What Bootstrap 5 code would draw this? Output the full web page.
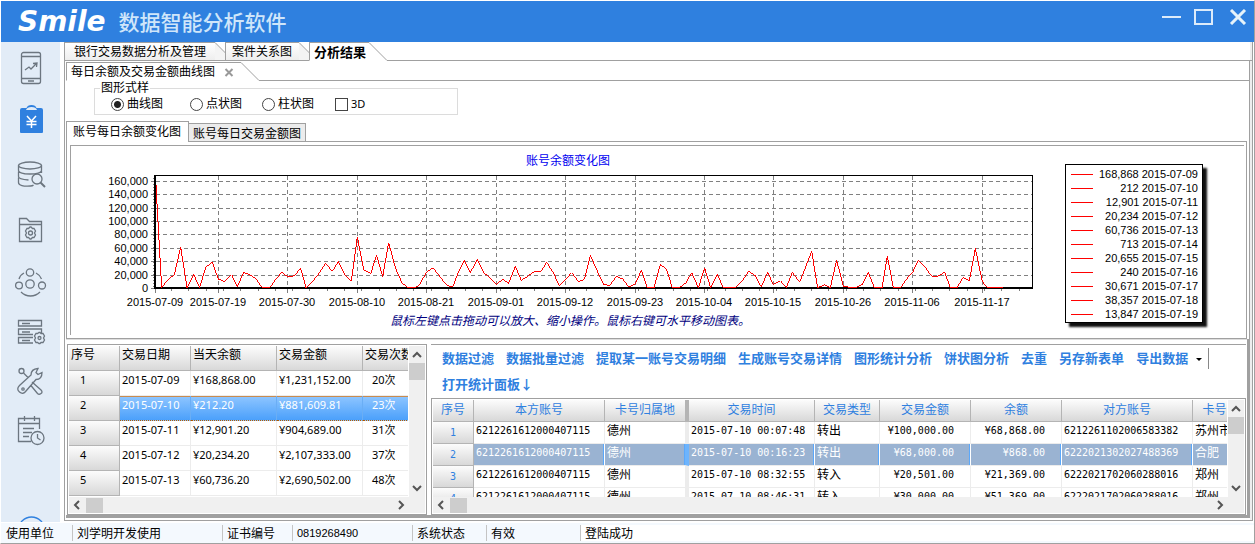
<!DOCTYPE html>
<html lang="zh-CN">
<head>
<meta charset="utf-8">
<meta name="viewport" content="width=device-width, initial-scale=1">
<title>Smile 数据智能分析软件</title>
<link href="https://cdn.jsdelivr.net/npm/bootstrap@5.3.0/dist/css/bootstrap.min.css" rel="stylesheet">
<style>
:root{--brand:#2f80df;--line:#a0a0a0;--cjk:"Noto Sans CJK SC";}
body{font:12px/18px "Noto Sans",var(--cjk),sans-serif;color:#000;background:#fff}
button{background:none;border:0;padding:0;color:inherit;font:inherit}
.shrinkable{min-width:0;min-height:0}
.app{height:100vh;min-height:500px;border:1px solid #fff;border-right-color:var(--line);border-bottom-color:var(--line);overflow:hidden}
.titlebar{height:41px;background:var(--brand);color:#e6f1fc;padding:0 7px 0 17px}
.logo{font:italic bold 28px/42px "DejaVu Sans",sans-serif;color:#fff}
.product{font:500 21px/41px var(--cjk),sans-serif;color:#cfe6fa;margin-left:13px}
.sidebar{width:59px;background:#e2ecf7;color:#6c7680;margin-right:4px;overflow:hidden}
.side-btn{height:49px;flex:none}
.h52{height:52px}.h56{height:56px}
.side-btn svg{fill:none;stroke:currentColor;stroke-width:1.3;display:block;margin:auto}
.side-btn.picked,.side-btn.info{color:var(--brand)}
.side-btn.info{margin-top:52px}
.level1{border:solid var(--line);border-width:0 1px 1px 1px;margin:0 1px 1px 0;padding:0 2px 2px 1px;box-shadow:inset -2px 0 #eee}
.level1>.inside{border:solid var(--line);border-width:0 1px 0 0;padding-top:1px}
.top-tabs{margin:0 -2px}
.tabline{height:19px}
.stab{height:19px;display:flex;flex:none;position:relative}
.stab>span{display:block;height:19px;border:1px solid var(--line);border-width:1px 0 1px 1px;background:linear-gradient(#fff,#eee);line-height:18px;white-space:nowrap;padding:0 7px 0 6px}
.stab>svg{display:block;flex:none}
.stab+.stab{margin-left:-8px}
.stab.on>span{background:#fff;border-bottom-color:#fff}
.stab.first>span{padding:0 9px}
.tab-bold>span{font-weight:700;font-size:13px;padding:0 3px 0 4px}
.rest{border-bottom:1px solid var(--line)}
.style-box{width:364px;max-width:90%;height:34px;margin-left:28px;border:1px solid #dcdcdc;padding:0 0 0 16px}
.style-box legend{float:none;width:auto;font-size:12px;line-height:14px;height:14px;margin:0 0 0 -11px;padding:0 1px}
.choices{display:grid;grid-template-columns:79px 72px 73px auto;height:18px}
.choices label{display:flex;align-items:center;gap:3px;line-height:18px}
.choices .ascii{font-size:11px}
.choices input{appearance:none;width:13px;height:13px;margin:0;border:1px solid #444;background:#fff;flex:none}
.choices input[type=radio]{border-radius:50%}
.choices input[type=radio]:checked{background:radial-gradient(circle,#222 0 3px,#fff 4px)}
.page-tabs{margin:6px 2px 0 0}
.ctab{border:1px solid var(--line);border-bottom:0;padding:0 7px 0 6px;height:21px;line-height:20px;white-space:nowrap}
.ctab.off{background:#ececec;height:19px;border-width:1px 1px 1px 0;padding:0 4px;line-height:19px;border-bottom:1px solid var(--line)}
.chart-page{border:solid var(--line);border-width:0 1px 1px 1px;margin-right:2px;padding:3px 2px 3px 3px}
.chart-frame{border:solid var(--line);border-width:1px 0 0 1px;height:190px}
.chart-frame svg{height:189px;min-width:0;flex:1 1 0}
.axis{font:11px "Liberation Sans",sans-serif}
.series-list{font:11px/14px "Liberation Sans",sans-serif;border:1px solid #000;background:#fff;box-shadow:4px 4px 2px #111;margin:18px 41px 0 0;padding:2px 4px 2px 5px;width:138px;height:159px;flex:none}
.series-list i{width:22px;height:1px;background:red}
.lower{border:solid var(--line);border-width:0 3px 3px 0;margin-right:-1px;padding:5px 1px 0 1px;background:#fff;box-shadow:inset 0 1px #ddd}
.pane-l{width:360px;border:1px solid var(--line);flex:none;padding:1px;margin-right:4px;min-height:0}
.pane-r{border-top:1px solid var(--line);min-width:0}
.tools{padding:3px 4px 3px 11px;height:53px;align-content:flex-start}
.tools a{color:var(--brand);font:bold 13px/20px var(--cjk),sans-serif;text-decoration:none;margin:0 12px 0 0;white-space:nowrap}
.tools .w-100{height:5px}
.caret{border:solid transparent;border-width:3px 3px 0;border-top-color:#000;margin:10px 6px 0 -4px}
.vsep{width:1px;height:21px;background:#888}
.gridbox{border:1px solid var(--line);padding:1px;min-height:0}
.view{overflow:hidden;min-width:0;min-height:0}
.data{table-layout:fixed;border-collapse:separate;border-spacing:0;white-space:nowrap}
.data th,.data td{font-weight:400;overflow:hidden;vertical-align:top;border:solid #ececec;border-width:0 1px 1px 0;padding:0 0 0 2px}
.data thead th,.data tbody th{background:linear-gradient(#fcfcfc,#d8d8d8);border-color:#b4b4b4}
.daily{width:380px;font-size:11px;line-height:18px}
.daily tr{height:25px}
.daily thead th{font-size:12px}
.daily tbody th{padding-left:11px}
.daily .times{padding-left:9px}
.daily .sel td{background:linear-gradient(#8fc6ff,#4ba0fb);color:#fff;border-color:#6aaef5;border-bottom:1px dotted #b35a00;box-shadow:inset 0 1px #c98b4e}
.deals{width:840px;font:12px/18px "DejaVu Sans Mono",var(--cjk),monospace}
.deals tr{height:22px}
.deals th{color:var(--brand);text-align:center;line-height:21px;padding:0!important}
.deals .n{font-size:10px}
.deals .amt{text-align:right;padding-right:16px}
.deals .cut{border-right-width:4px}
.deals .sel td{background:#9ab3d2;color:#fff;border-right-color:#fff;box-shadow:inset -1px 0 #5aa8fb}
.deals .sel .cut{border-right-color:#6db4fd}
.scroll-v{width:16px;background:#f0f0f0;flex:none;margin-left:1px}
.scroll-h{height:16px;background:#f0f0f0;flex:none}
.thumb{width:17px;height:17px;background:#cdcdcd}
.scroll-h .thumb{height:15px}
.arrow{fill:none;stroke:#555;stroke-width:2;display:block}
.status{height:20px;background:#f4f9fe;margin-top:1px}
.status span{padding-left:4px;border-left:1px solid #c4c4c4;margin:2px 0;line-height:17px;flex:none}
.status span:first-child{border:0;padding-left:5px}
.status .serial{font:11px/17px "Liberation Sans",sans-serif}
</style>
</head>
<body>
<div class="app d-flex flex-column">
  <header class="titlebar d-flex align-items-center flex-shrink-0">
    <div class="logo">Smile</div><div class="product">数据智能分析软件</div>
    <div class="ms-auto align-self-start mt-1 pt-1 d-flex align-items-center gap-2">
      <button aria-label="最小化"><svg class="d-block" width="24" height="16"><path d="M3 8h19" stroke="#dcebfa" stroke-width="2"/></svg></button>
      <button aria-label="最大化"><svg class="d-block" width="24" height="16"><path d="M4 1h17v14H4z" fill="none" stroke="#dcebfa" stroke-width="2"/></svg></button>
      <button aria-label="关闭"><svg class="d-block" width="24" height="16"><path d="M8 1l14 14M22 1L8 15" stroke="#e6f3fa" stroke-width="3"/></svg></button>
    </div>
  </header>

  <div class="d-flex flex-fill shrinkable">
    <nav class="sidebar d-flex flex-column flex-shrink-0" aria-label="功能">
      <button class="side-btn h52" aria-label="手机分析"><svg width="32" height="34" viewBox="0 0 32 34"><rect x="6.500" y="1.500" width="19" height="31" rx="2"/><path d="M6.500 5.500h19M6.500 27.500h19M13 30h6M10 19l4-3 2 2 5-5M18 12.500l4-.5-.5 4"/></svg></button>
      <button class="side-btn h52 picked" aria-label="银行交易"><svg width="32" height="32" viewBox="0 0 32 32"><path d="M5 6q0-2 2-2h4.500q1-3 5-3t5 3H26q2 0 2 2v22q0 1-1 1H6q-1 0-1-1z" fill="currentColor" stroke="none"/><path d="M11 6q1-3 5.500-3T22 6z" fill="#e2ecf7" stroke="none"/><path d="M12 12l4.500 5 4.500-5M11.500 17.500h10M11.500 20.500h10M16.500 17v7" stroke="#fff" stroke-width="1.500"/></svg></button>
      <button class="side-btn h56" aria-label="数据查询"><svg width="32" height="32" viewBox="0 0 32 32"><ellipse cx="15" cy="7.500" rx="11.500" ry="3.500"/><path d="M3.500 7.500v5c0 2 5 3.500 11.500 3.500s11.500-1.500 11.500-3.500v-5M3.500 13.500v5c0 2 4 3 10 3.500M26.500 13v2M3.500 19.500v5c0 3 5 4 12 3.500q2 0 3-1"/><circle cx="22" cy="21" r="5"/><path d="M25.500 24.500l4.500 4.500" stroke-width="2"/></svg></button>
      <button class="side-btn h56" aria-label="案件管理"><svg width="32" height="32" viewBox="0 0 32 32"><path d="M4.500 27.500v-23h7l3 3h12v20zM4.500 10.500h22"/><path d="M12 14.500h1.500L15 13h1l1.500 1.500H19l1.500 2.500-1 2 1 2-1.500 2.500h-1.500L16 25h-1l-1.500-1.500H12L10.500 21l1-2-1-2z"/><circle cx="15.500" cy="19" r="2"/></svg></button>
      <button class="side-btn" aria-label="关系图"><svg width="32" height="32" viewBox="0 0 32 32"><circle cx="15" cy="5.500" r="3.700"/><circle cx="15" cy="17" r="4.200"/><circle cx="4" cy="18.500" r="3.400"/><circle cx="27" cy="18.500" r="3.500"/><path d="M4 12q1-4 5-6M21 6q4 2 5.500 6M6 25q4 4 9.500 4t9.500-4"/></svg></button>
      <button class="side-btn" aria-label="服务器"><svg width="32" height="32" viewBox="0 0 32 32"><path d="M3.500 4.500h23v5.500h-23zM18 18.500H3.500V13h23v4M18 21.500H3.500v5.500H18M7 7.500h8M7 16h8M7 24.500h8"/><path d="M21 17.500h1.500l1.500-1h1l1 1h2l1.500 2.500-1 2 1 2-1.500 2.500h-2l-1 1h-1l-1.500-1H21L19.500 24l1-2-1-2z"/><circle cx="24.500" cy="22" r="1.500"/></svg></button>
      <button class="side-btn" aria-label="工具"><svg width="32" height="32" viewBox="0 0 32 32"><circle cx="6.500" cy="6" r="2.500"/><path d="M8.500 8l5 5M17 17l9 8q2 2 0 3.500t-3.500 0L15.500 20M16 10q0-6 7-6.500l-2 4 2 2 4-2q0 7-6 7L11 26q-3 4-6.500 1t0-6.500z"/><circle cx="8" cy="24" r="1.200"/></svg></button>
      <button class="side-btn" aria-label="日程"><svg width="32" height="32" viewBox="0 0 32 32"><path d="M16 27.500H3.500v-23h21V15M3.500 9.500h21M9.500 2v5M19.500 2v5M8 14.500h11M8 18.500h9M8 22.500h6"/><circle cx="22.500" cy="24" r="6.500"/><path d="M22.500 20v4l3 2"/></svg></button>
      <button class="side-btn info" aria-label="关于"><svg width="32" height="36" viewBox="0 0 32 36"><circle cx="16.500" cy="17" r="13"/><path d="M16.500 10v2M16.500 14v9" stroke-width="2"/></svg></button>
    </nav>

    <main class="d-flex flex-column flex-fill shrinkable">
      <div class="level1 d-flex flex-column flex-fill shrinkable">
        <div class="tabline top-tabs d-flex flex-shrink-0">
          <button class="stab first"><span>银行交易数据分析及管理</span><svg width="18" height="19"><path d="M0 0L18 18.500H0z" fill="#f4f4f4"/><path d="M0 .5L18 18.500H0" fill="none" stroke="#a0a0a0"/></svg></button>
          <button class="stab"><span>案件关系图</span><svg width="18" height="19"><path d="M0 .5L18 18.500H0" fill="#f4f4f4" stroke="#a0a0a0"/></svg></button>
          <button class="stab on tab-bold"><span>分析结果</span><svg width="18" height="19"><path d="M0 .5L18 18.500" fill="none" stroke="#a0a0a0"/></svg></button>
          <div class="rest flex-fill"></div>
        </div>
        <div class="inside d-flex flex-column flex-fill shrinkable">
          <div class="tabline d-flex flex-shrink-0">
            <div class="stab on"><span class="ps-1">每日余额及交易金额曲线图<button class="ms-2" aria-label="关闭标签"><svg width="11" height="9"><path d="M2.500 1l7 7M9.500 1l-7 7" stroke="#999" stroke-width="2"/></svg></button></span><svg width="18" height="19"><path d="M0 .5L18 18.500" fill="none" stroke="#a0a0a0"/></svg></div>
            <div class="rest flex-fill"></div>
          </div>
          <fieldset class="style-box flex-shrink-0"><legend>图形式样</legend>
            <div class="choices">
              <label><input type="radio" name="kind" checked>曲线图</label>
              <label><input type="radio" name="kind">点状图</label>
              <label><input type="radio" name="kind">柱状图</label>
              <label class="ascii"><input type="checkbox">3D</label>
            </div>
          </fieldset>
          <div class="page-tabs d-flex align-items-end flex-shrink-0">
            <button class="ctab">账号每日余额变化图</button><button class="ctab off">账号每日交易金额图</button><div class="rest flex-fill"></div>
          </div>
          <section class="chart-page flex-shrink-0">
            <div class="chart-frame d-flex align-items-start">
              <svg viewBox="71 146 990 189" preserveAspectRatio="xMinYMin meet" font-family="Noto Sans CJK SC, sans-serif" font-size="12" role="img" aria-label="账号余额变化图">
                <text x="568" y="165" text-anchor="middle" fill="#0000f0">账号余额变化图</text>
                <g stroke="#808080" stroke-dasharray="4 3" shape-rendering="crispEdges">
                  <path d="M156 181.500h876M156 194.500h876M156 208.500h876M156 221.500h876M156 234.500h876M156 248.500h876M156 261.500h876M156 275.500h876"/>
                  <path d="M218.500 176v112M287.500 176v112M357.500 176v112M426.500 176v112M496.500 176v112M565.500 176v112M635.500 176v112M704.500 176v112M773.500 176v112M843.500 176v112M912.500 176v112M982.500 176v112"/>
                </g>
                <g stroke="#808080" shape-rendering="crispEdges">
                  <path d="M151 181.500h4M151 194.500h4M151 208.500h4M151 221.500h4M151 234.500h4M151 248.500h4M151 261.500h4M151 275.500h4M151 288.500h4"/>
                  <path d="M155.500 289v4M218.500 289v4M287.500 289v4M357.500 289v4M426.500 289v4M496.500 289v4M565.500 289v4M635.500 289v4M704.500 289v4M773.500 289v4M843.500 289v4M912.500 289v4M982.500 289v4"/>
                  <path d="M153.500 178v110" stroke-dasharray="1 2"/>
                  <path d="M171 290h861" stroke-width="2" stroke-dasharray="1 16.300"/>
                </g>
                <path d="M154 175.500h878.500V288" fill="none" stroke="#000" shape-rendering="crispEdges"/>
                <path d="M155 175v113h878" fill="none" stroke="#000" stroke-width="2" shape-rendering="crispEdges"/>
                <g fill="none" stroke="red" stroke-width="3" shape-rendering="crispEdges" transform="translate(64 140) scale(.33333)">
                  <polyline points="276,135 285,300 293,443 313,418 331,404 350,321 369,443 389,403 407,443 425,382 445,367 463,417 482,425 503,404 520,441 539,397 558,405 576,417 594,442 618,442 634,420 653,397 672,411 691,407 710,385 726,443 746,424 765,400 785,370 805,394 823,364 843,405 862,424 880,291 899,389 920,401 938,346 956,410 974,308 994,383 1014,429 1033,443 1053,443 1067,434 1088,395 1108,384 1127,409 1148,436 1166,441 1183,397 1201,361"/>
                  <polyline transform="translate(1158)" points="43,361 61,398 82,358 101,398 118,411 139,433 158,418 176,430 196,379 214,421 233,409 252,395 273,394 290,367 308,395 328,436 346,419 365,398 386,425 403,418 421,346 441,391 460,432 479,437 499,409 518,417 536,441 556,432 574,391 592,443 612,443 631,374 649,387 667,443 688,443 708,428 725,398 745,443 764,385 782,443 802,403 820,443 857,443 878,421 896,394 915,406 934,441 953,397 970,434 991,422 1009,443 1027,397 1049,427 1085,334 1103,443 1124,434 1141,443 1160,361 1180,438"/>
                  <polyline transform="translate(2328)" points="10,440 48,443 66,434 85,397 103,443 126,443 142,348 160,443 182,443 198,419 218,397 235,361 254,379 275,409 295,408 314,397 331,443 351,443 370,412 388,423 406,325 427,425 442,443 490,443"/>
                </g>
                <g class="axis" text-anchor="end"><text x="148" y="185">160,000</text><text x="148" y="198">140,000</text><text x="148" y="212">120,000</text><text x="148" y="225">100,000</text><text x="148" y="238">80,000</text><text x="148" y="252">60,000</text><text x="148" y="265">40,000</text><text x="148" y="279">20,000</text><text x="148" y="292">0</text></g>
                <g class="axis" text-anchor="middle"><text x="155" y="306">2015-07-09</text><text x="218" y="306">2015-07-19</text><text x="287" y="306">2015-07-30</text><text x="357" y="306">2015-08-10</text><text x="426" y="306">2015-08-21</text><text x="496" y="306">2015-09-01</text><text x="565" y="306">2015-09-12</text><text x="635" y="306">2015-09-23</text><text x="704" y="306">2015-10-04</text><text x="773" y="306">2015-10-15</text><text x="843" y="306">2015-10-26</text><text x="912" y="306">2015-11-06</text><text x="982" y="306">2015-11-17</text></g>
                <text x="390" y="325" fill="#000080" font-style="italic">鼠标左键点击拖动可以放大、缩小操作。鼠标右键可水平移动图表。</text>
              </svg>
              <ul class="series-list list-unstyled">
                <li class="d-flex align-items-center justify-content-between"><i></i>168,868 2015-07-09</li>
                <li class="d-flex align-items-center justify-content-between"><i></i>212 2015-07-10</li>
                <li class="d-flex align-items-center justify-content-between"><i></i>12,901 2015-07-11</li>
                <li class="d-flex align-items-center justify-content-between"><i></i>20,234 2015-07-12</li>
                <li class="d-flex align-items-center justify-content-between"><i></i>60,736 2015-07-13</li>
                <li class="d-flex align-items-center justify-content-between"><i></i>713 2015-07-14</li>
                <li class="d-flex align-items-center justify-content-between"><i></i>20,655 2015-07-15</li>
                <li class="d-flex align-items-center justify-content-between"><i></i>240 2015-07-16</li>
                <li class="d-flex align-items-center justify-content-between"><i></i>30,671 2015-07-17</li>
                <li class="d-flex align-items-center justify-content-between"><i></i>38,357 2015-07-18</li>
                <li class="d-flex align-items-center justify-content-between"><i></i>13,847 2015-07-19</li>
              </ul>
            </div>
          </section>

          <div class="lower d-flex flex-fill shrinkable">
            <section class="pane-l d-flex flex-column">
              <div class="d-flex flex-fill shrinkable">
                <div class="view flex-fill">
                  <table class="data daily">
                    <colgroup><col style="width:51px"><col style="width:71px"><col style="width:86px"><col style="width:86px"><col style="width:86px"></colgroup>
                    <thead><tr><th>序号</th><th>交易日期</th><th>当天余额</th><th>交易金额</th><th>交易次数</th></tr></thead>
                    <tbody>
                      <tr><th>1</th><td>2015-07-09</td><td>¥168,868.00</td><td>¥1,231,152.00</td><td class="times">20次</td></tr>
                      <tr class="sel"><th>2</th><td>2015-07-10</td><td>¥212.20</td><td>¥881,609.81</td><td class="times">23次</td></tr>
                      <tr><th>3</th><td>2015-07-11</td><td>¥12,901.20</td><td>¥904,689.00</td><td class="times">31次</td></tr>
                      <tr><th>4</th><td>2015-07-12</td><td>¥20,234.20</td><td>¥2,107,333.00</td><td class="times">37次</td></tr>
                      <tr><th>5</th><td>2015-07-13</td><td>¥60,736.20</td><td>¥2,690,502.00</td><td class="times">48次</td></tr>
                    </tbody>
                  </table>
                </div>
                <div class="scroll-v d-flex flex-column"><svg class="arrow" width="16" height="17"><path d="M4 11l4-4 4 4"/></svg><div class="thumb w-100"></div><svg class="arrow mt-auto" width="16" height="17"><path d="M4 6l4 4 4-4"/></svg></div>
              </div>
              <div class="scroll-h d-flex align-items-center"><svg class="arrow" width="17" height="16"><path d="M10 4L6 8l4 4"/></svg><div class="thumb"></div><svg class="arrow ms-auto me-3" width="17" height="16"><path d="M7 4l4 4-4 4"/></svg></div>
            </section>

            <section class="pane-r d-flex flex-column flex-fill">
              <div class="tools d-flex flex-wrap flex-shrink-0">
                <a href="#">数据过滤</a><a href="#">数据批量过滤</a><a href="#">提取某一账号交易明细</a><a href="#">生成账号交易详情</a><a href="#">图形统计分析</a><a href="#">饼状图分析</a><a href="#">去重</a><a href="#">另存新表单</a><a href="#">导出数据</a><span class="caret align-self-start"></span><span class="vsep"></span>
                <div class="w-100"></div>
                <a href="#">打开统计面板↓</a>
              </div>
              <div class="gridbox d-flex flex-column flex-fill">
                <div class="d-flex flex-fill shrinkable">
                  <div class="view flex-fill">
                    <table class="data deals">
                      <colgroup><col style="width:41px"><col style="width:131px"><col style="width:84px"><col style="width:126px"><col style="width:65px"><col style="width:91px"><col style="width:91px"><col style="width:131px"><col style="width:80px"></colgroup>
                      <thead><tr><th>序号</th><th>本方账号</th><th class="cut">卡号归属地</th><th>交易时间</th><th>交易类型</th><th>交易金额</th><th>余额</th><th>对方账号</th><th>卡号归属地</th></tr></thead>
                      <tbody>
                        <tr><th class="n">1</th><td class="n">6212261612000407115</td><td class="cut">德州</td><td class="n">2015-07-10 00:07:48</td><td>转出</td><td class="n amt">¥100,000.00</td><td class="n amt">¥68,868.00</td><td class="n">6212261102006583382</td><td>苏州市</td></tr>
                        <tr class="sel"><th class="n">2</th><td class="n">6212261612000407115</td><td class="cut">德州</td><td class="n">2015-07-10 00:16:23</td><td>转出</td><td class="n amt">¥68,000.00</td><td class="n amt">¥868.00</td><td class="n">6222021302027488369</td><td>合肥</td></tr>
                        <tr><th class="n">3</th><td class="n">6212261612000407115</td><td class="cut">德州</td><td class="n">2015-07-10 08:32:55</td><td>转入</td><td class="n amt">¥20,501.00</td><td class="n amt">¥21,369.00</td><td class="n">6222021702060288016</td><td>郑州</td></tr>
                        <tr><th class="n">4</th><td class="n">6212261612000407115</td><td class="cut">德州</td><td class="n">2015-07-10 08:46:31</td><td>转入</td><td class="n amt">¥30,000.00</td><td class="n amt">¥51,369.00</td><td class="n">6222021702060288016</td><td>郑州</td></tr>
                      </tbody>
                    </table>
                  </div>
                  <div class="scroll-v d-flex flex-column"><svg class="arrow" width="16" height="17"><path d="M4 11l4-4 4 4"/></svg><div class="thumb w-100"></div><svg class="arrow mt-auto" width="16" height="17"><path d="M4 6l4 4 4-4"/></svg></div>
                </div>
                <div class="scroll-h d-flex align-items-center"><svg class="arrow" width="17" height="16"><path d="M10 4L6 8l4 4"/></svg><div class="thumb"></div><svg class="arrow ms-auto me-3" width="17" height="16"><path d="M7 4l4 4-4 4"/></svg></div>
              </div>
            </section>
          </div>
        </div>
      </div>
    </main>
  </div>

  <footer class="status d-flex flex-shrink-0">
    <span style="width:71px">使用单位</span><span style="width:150px">刘学明开发使用</span><span style="width:70px">证书编号</span><span style="width:120px" class="serial">0819268490</span><span style="width:74px">系统状态</span><span style="width:94px">有效</span><span class="flex-fill bg-white">登陆成功</span>
  </footer>
</div>
<script src="https://cdn.jsdelivr.net/npm/bootstrap@5.3.0/dist/js/bootstrap.bundle.min.js"></script>
</body>
</html>
